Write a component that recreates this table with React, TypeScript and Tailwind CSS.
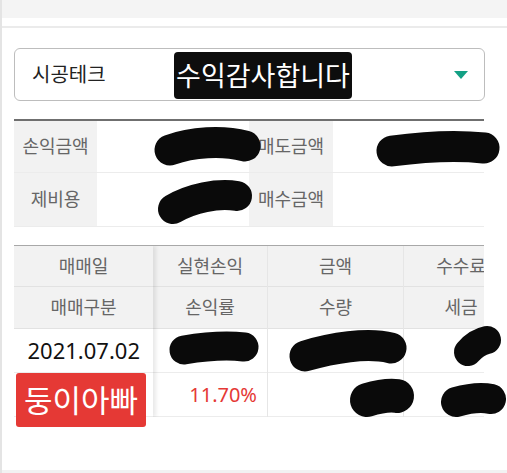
import React from 'react';

const font = "font-['Noto_Sans','Noto_Sans_CJK_KR',sans-serif]";

const Blobs: React.FC = () => (
  <svg className="absolute left-0 top-0 z-30 pointer-events-none" width="507" height="473" viewBox="0 0 507 473">
    <g fill="none" stroke="#0a0a0a" strokeLinecap="round" strokeLinejoin="round">
      <path d="M168 150 C 190 142, 220 140, 243 146" strokeWidth={31} />
      <path d="M390 151 C 420 147, 455 145, 482 148" strokeWidth={31} />
      <path d="M171 209 C 190 198, 215 193, 235 196" strokeWidth={30} />
      <path d="M182 350 C 200 347, 225 345, 242 347" strokeWidth={29} />
      <path d="M303 356 C 330 348, 365 342, 389 348" strokeWidth={31} />
      <path d="M466 352 C 472 345, 480 341, 485 340" strokeWidth={28} />
      <path d="M365 400 C 375 397, 388 395, 395 396" strokeWidth={34} />
      <path d="M454 402 C 468 398, 480 397, 489 399" strokeWidth={30} />
    </g>
  </svg>
);

const InfoLabel: React.FC<{ text: string; w: string }> = ({ text, w }) => (
  <div className={`${w} h-full flex items-center justify-center bg-[#f2f2f2] text-[18px] text-[#666]`}>{text}</div>
);

const App: React.FC = () => {
  return (
    <div className={`relative w-[507px] h-[473px] overflow-hidden bg-white flex flex-col border-l-2 border-[#e4e4e4] ${font}`}>
      <div className="h-[18px] shrink-0 bg-[#f4f4f4]" />
      <div className="h-[8px] shrink-0" />
      <div className="h-[2px] shrink-0 bg-[#ebebeb]" />

      <div className="flex-1 px-[12px] pt-[20px]">
        {/* stock selector */}
        <div className="h-[53px] w-[471px] rounded-[6px] border border-[#bdbdbd] flex items-center justify-between pl-[17px] pr-[16px]">
          <span className="text-[20px] text-[#222]">시공테크</span>
          <svg width="14" height="8" viewBox="0 0 14 8">
            <path d="M0 0 H14 L7 8 Z" fill="#13a084" />
          </svg>
        </div>

        {/* summary */}
        <div className="mt-[18px] w-[470px] border-t-2 border-[#6f6f6f]">
          <div className="flex h-[52px] border-b border-[#ececec]">
            <InfoLabel text="손익금액" w="w-[83px]" />
            <div className="w-[152px]" />
            <InfoLabel text="매도금액" w="w-[84px]" />
            <div className="flex-1" />
          </div>
          <div className="flex h-[54px] border-b border-[#ececec]">
            <InfoLabel text="제비용" w="w-[83px]" />
            <div className="w-[152px]" />
            <InfoLabel text="매수금액" w="w-[84px]" />
            <div className="flex-1" />
          </div>
        </div>

        {/* trades */}
        <div className="mt-[18px] w-[470px] overflow-hidden border-t border-[#a8a8a8] flex text-[18px] text-[#666]">
          <div className="relative z-10 w-[139px] shrink-0 shadow-[3px_0_4px_rgba(0,0,0,0.09)] bg-white">
            <div className="h-[41px] bg-[#f2f2f2] border-b border-[#e2e2e2] flex items-center justify-center">매매일</div>
            <div className="h-[42px] bg-[#f2f2f2] border-b border-[#e2e2e2] flex items-center justify-center">매매구분</div>
            <div className="h-[44px] border-b border-[#ececec] flex items-center justify-end pr-[13px] text-[22px] text-[#111]">2021.07.02</div>
            <div className="h-[44px] border-b border-[#ececec]" />
          </div>
          <div className="flex shrink-0">
            <div className="w-[115px] shrink-0 border-r border-[#e6e6e6]">
              <div className="h-[41px] bg-[#f2f2f2] border-b border-[#e2e2e2] flex items-center justify-center">실현손익</div>
              <div className="h-[42px] bg-[#f2f2f2] border-b border-[#e2e2e2] flex items-center justify-center">손익률</div>
              <div className="h-[44px] border-b border-[#ececec]" />
              <div className="h-[44px] border-b border-[#ececec] flex items-center justify-end pr-[10px] text-[20px] text-[#e53935]">11.70%</div>
            </div>
            <div className="w-[136px] shrink-0 border-r border-[#e6e6e6]">
              <div className="h-[41px] bg-[#f2f2f2] border-b border-[#e2e2e2] flex items-center justify-center">금액</div>
              <div className="h-[42px] bg-[#f2f2f2] border-b border-[#e2e2e2] flex items-center justify-center">수량</div>
              <div className="h-[44px] border-b border-[#ececec]" />
              <div className="h-[44px] border-b border-[#ececec]" />
            </div>
            <div className="w-[114px] shrink-0">
              <div className="h-[41px] bg-[#f2f2f2] border-b border-[#e2e2e2] flex items-center justify-center">수수료</div>
              <div className="h-[42px] bg-[#f2f2f2] border-b border-[#e2e2e2] flex items-center justify-center">세금</div>
              <div className="h-[44px] border-b border-[#ececec]" />
              <div className="h-[44px] border-b border-[#ececec]" />
            </div>
          </div>
        </div>
      </div>

      <div className="h-[3px] shrink-0 bg-[#f2f2f2]" />

      {/* stickers over the screenshot */}
      <div className="absolute z-20 left-[172px] top-[52px] w-[178px] h-[47px] rounded-[4px] bg-[#0d0d0d] flex items-center justify-center text-[27px] text-white leading-none">
        수익감사합니다
      </div>
      <div className="absolute z-20 left-[14px] top-[373px] w-[130px] h-[54px] rounded-[3px] bg-[#e53935] flex items-center justify-center text-[31px] text-white leading-none">
        둥이아빠
      </div>
      <Blobs />
    </div>
  );
};

export default App;
